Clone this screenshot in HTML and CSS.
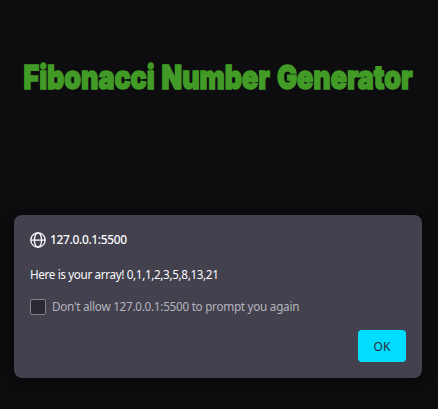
FILE: index.html
```
<!DOCTYPE html>
<html lang="en">
<head>
<meta charset="utf-8">
<title>Fibonacci Number Generator</title>
<link rel="stylesheet" href="styles.css">
</head>
<body>
<main class="page">
  <h1 class="title">
    <svg class="title-art" width="438" height="40" viewBox="0 0 438 40">
      <text transform="translate(23.5 31.6) scale(0.73 1)" textLength="533" lengthAdjust="spacingAndGlyphs">Fibonacci Number Generator</text>
    </svg>
  </h1>
  <section class="dialog" role="dialog">
    <header class="origin">
      <svg class="globe" width="16" height="16" viewBox="0 0 16 16">
        <circle cx="8" cy="8" r="7.2"/>
        <ellipse cx="8" cy="8" rx="3.6" ry="7.2"/>
        <path d="M1 8.1h14"/>
      </svg>
      <span class="host">127.0.0.1:5500</span>
    </header>
    <p class="message">Here is your array! 0,1,1,2,3,5,8,13,21</p>
    <div class="option"><span class="box"></span><span class="option-text">Don't allow 127.0.0.1:5500 to prompt you again</span></div>
    <div class="actions"><button class="ok">OK</button></div>
  </section>
</main>
</body>
</html>
```
FILE: styles.css
```
* { box-sizing: border-box; }
body {
  margin: 0;
  background: #0d0d0f;
  color: #fbfbfe;
  font: 12px/16px "Noto Sans", "Open Sans", sans-serif;
  overflow: hidden;
}
.page { height: 409px; padding-top: 57px; }
.title { margin: 0 0 118px; height: 40px; }
.title-art { display: block; }
.title-art text {
  font-family: Inter, "Open Sans", sans-serif;
  font-size: 33px;
  font-weight: 900;
  word-spacing: 2px;
  fill: #429b27;
  stroke: #429b27;
  stroke-width: 1.5px;
}
.dialog {
  width: 408px;
  height: 163px;
  margin-left: 14px;
  padding: 16px;
  border-radius: 8px;
  background: #42414d;
  box-shadow: 0 2px 12px rgba(0, 0, 0, 0.5);
}
.origin { display: flex; align-items: center; gap: 4px; height: 17px; }
.globe { fill: none; stroke: #fbfbfe; stroke-width: 1.3; }
.host { font-weight: 500; letter-spacing: -0.35px; }
.message { margin: 18px 0 0; height: 16px; font-size: 11.7px; letter-spacing: -0.36px; white-space: nowrap; }
.option { display: flex; align-items: center; gap: 6px; height: 16px; margin-top: 17px; color: #b5b4bf; white-space: nowrap; }
.box { width: 16px; height: 16px; border: 1px solid #84838c; border-radius: 2px; background: #2b2a33; }
.option-text { margin-bottom: 2px; font-size: 11.7px; letter-spacing: -0.26px; }
.actions { display: flex; justify-content: flex-end; margin-top: 15px; }
.ok {
  width: 48px;
  height: 32px;
  padding: 1px 0 0;
  border: 0;
  border-radius: 4px;
  background: #00ddff;
  color: #2b2a33;
  font: inherit;
}
```
